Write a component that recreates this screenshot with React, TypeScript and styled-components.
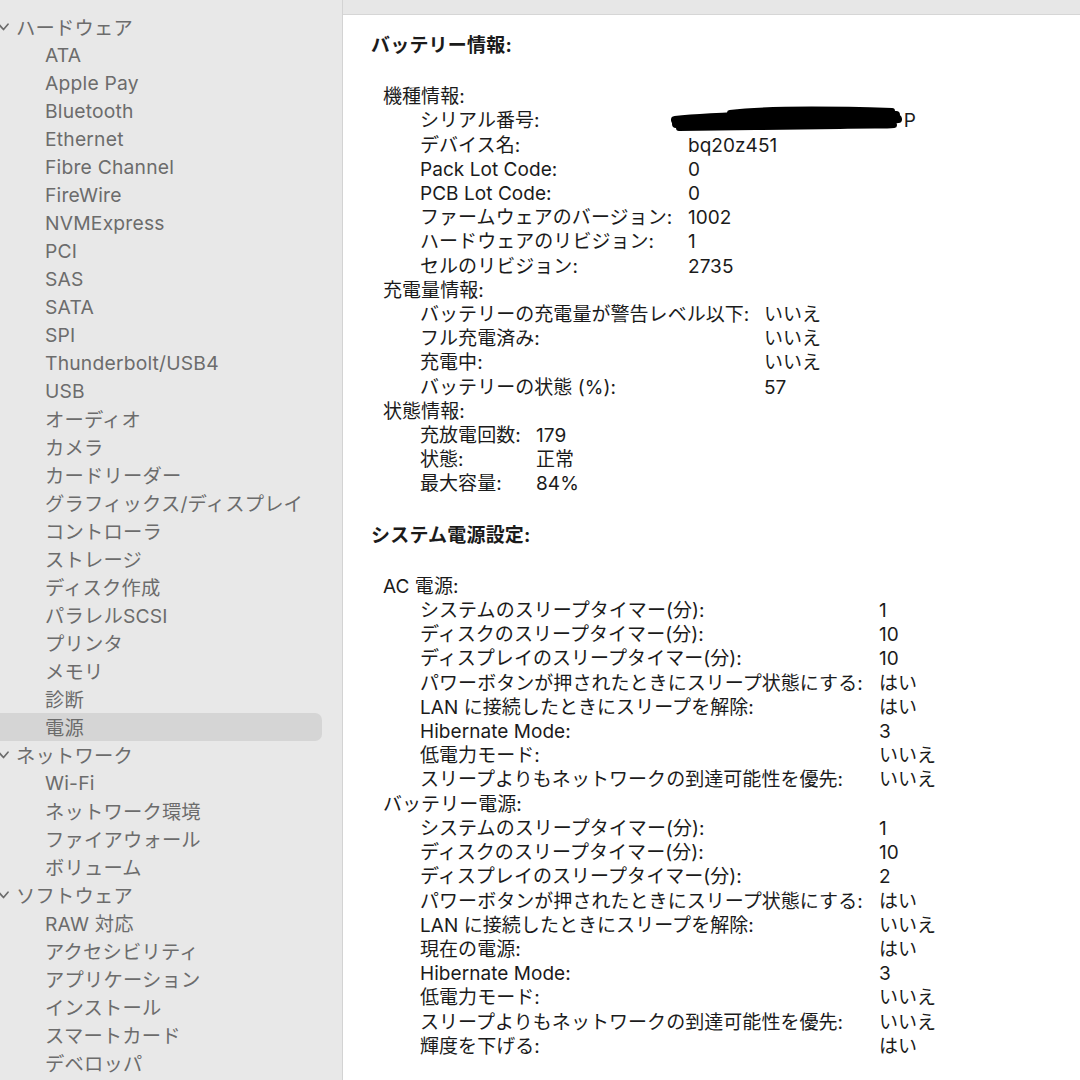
import styled, { createGlobalStyle } from "styled-components";

const GlobalStyle = createGlobalStyle`
  html, body {
    margin: 0;
    padding: 0;
    background: #ffffff;
  }
  body {
    font-family: Inter, "Noto Sans", "Noto Sans CJK JP", sans-serif;
    -webkit-font-smoothing: antialiased;
  }
`;

const Window = styled.div`
  display: grid;
  grid-template-columns: 343px 1fr;
  width: 1080px;
  height: 1080px;
  overflow: hidden;
`;

const Sidebar = styled.div`
  background: #e8e8e8;
  border-right: 1px solid #d3d3d3;
  padding-top: 13px;
  display: flex;
  flex-direction: column;
`;

const SideRow = styled.div<{ $selected?: boolean; $heading?: boolean }>`
  height: 28px;
  display: flex;
  align-items: center;
  gap: 7px;
  padding-left: ${(p) => (p.$heading ? "0" : "45px")};
  margin-right: 20px;
  border-radius: 0 7px 7px 0;
  background: ${(p) => (p.$selected ? "#d5d5d5" : "transparent")};
  color: #6c6c6c;
  font-size: 19.3px;
  letter-spacing: 0.2px;
  white-space: nowrap;
`;

const Chevron = styled.svg`
  width: 9px;
  height: 8px;
  flex: none;
`;

const Main = styled.div`
  display: flex;
  flex-direction: column;
  background: #ffffff;
`;

const TopStrip = styled.div`
  height: 14px;
  flex: none;
  background: #e7e7e7;
  border-bottom: 1px solid #d6d6d6;
`;

const Content = styled.div`
  padding: 19px 0 0 28px;
  color: #1b1b1b;
  font-size: 19px;
  letter-spacing: 0.05px;
  line-height: 24.2px;
`;

const SectionTitle = styled.div`
  font-weight: 700;
  margin-bottom: 27px;
  letter-spacing: 0.2px;
`;

const Section = styled.div`
  margin-bottom: 27px;
`;

const GroupTitle = styled.div`
  padding-left: 12px;
`;

const Grid = styled.div<{ $labelWidth: number }>`
  display: grid;
  grid-template-columns: ${(p) => p.$labelWidth}px auto;
  padding-left: 49px;
  white-space: nowrap;
`;

const Label = styled.div``;

const Value = styled.div``;

const Redacted = styled.span`
  position: relative;
  display: inline-block;
  width: 228px;
  text-align: right;
`;

const Scribble = styled.svg`
  position: absolute;
  left: -18px;
  top: -4px;
  width: 240px;
  height: 30px;
`;

type Row = [string, string];
type Group = { title: string; labelWidth: number; rows: Row[] };
type Sec = { title: string; groups: Group[] };

const hardware = [
  "ATA",
  "Apple Pay",
  "Bluetooth",
  "Ethernet",
  "Fibre Channel",
  "FireWire",
  "NVMExpress",
  "PCI",
  "SAS",
  "SATA",
  "SPI",
  "Thunderbolt/USB4",
  "USB",
  "オーディオ",
  "カメラ",
  "カードリーダー",
  "グラフィックス/ディスプレイ",
  "コントローラ",
  "ストレージ",
  "ディスク作成",
  "パラレルSCSI",
  "プリンタ",
  "メモリ",
  "診断",
  "電源",
];

const network = ["Wi-Fi", "ネットワーク環境", "ファイアウォール", "ボリューム"];

const software = [
  "RAW 対応",
  "アクセシビリティ",
  "アプリケーション",
  "インストール",
  "スマートカード",
  "デベロッパ",
];

const sections: Sec[] = [
  {
    title: "バッテリー情報:",
    groups: [
      {
        title: "機種情報:",
        labelWidth: 268,
        rows: [
          ["シリアル番号:", "__REDACTED__"],
          ["デバイス名:", "bq20z451"],
          ["Pack Lot Code:", "0"],
          ["PCB Lot Code:", "0"],
          ["ファームウェアのバージョン:", "1002"],
          ["ハードウェアのリビジョン:", "1"],
          ["セルのリビジョン:", "2735"],
        ],
      },
      {
        title: "充電量情報:",
        labelWidth: 344,
        rows: [
          ["バッテリーの充電量が警告レベル以下:", "いいえ"],
          ["フル充電済み:", "いいえ"],
          ["充電中:", "いいえ"],
          ["バッテリーの状態 (%):", "57"],
        ],
      },
      {
        title: "状態情報:",
        labelWidth: 116,
        rows: [
          ["充放電回数:", "179"],
          ["状態:", "正常"],
          ["最大容量:", "84%"],
        ],
      },
    ],
  },
  {
    title: "システム電源設定:",
    groups: [
      {
        title: "AC 電源:",
        labelWidth: 459,
        rows: [
          ["システムのスリープタイマー(分):", "1"],
          ["ディスクのスリープタイマー(分):", "10"],
          ["ディスプレイのスリープタイマー(分):", "10"],
          ["パワーボタンが押されたときにスリープ状態にする:", "はい"],
          ["LAN に接続したときにスリープを解除:", "はい"],
          ["Hibernate Mode:", "3"],
          ["低電力モード:", "いいえ"],
          ["スリープよりもネットワークの到達可能性を優先:", "いいえ"],
        ],
      },
      {
        title: "バッテリー電源:",
        labelWidth: 459,
        rows: [
          ["システムのスリープタイマー(分):", "1"],
          ["ディスクのスリープタイマー(分):", "10"],
          ["ディスプレイのスリープタイマー(分):", "2"],
          ["パワーボタンが押されたときにスリープ状態にする:", "はい"],
          ["LAN に接続したときにスリープを解除:", "いいえ"],
          ["現在の電源:", "はい"],
          ["Hibernate Mode:", "3"],
          ["低電力モード:", "いいえ"],
          ["スリープよりもネットワークの到達可能性を優先:", "いいえ"],
          ["輝度を下げる:", "はい"],
        ],
      },
    ],
  },
];

function Heading({ text }: { text: string }) {
  return (
    <SideRow $heading>
      <Chevron viewBox="0 0 9 8">
        <path
          d="M-1 1.5 L3.5 6.5 L8 1.2"
          fill="none"
          stroke="#6c6c6c"
          strokeWidth="1.7"
          strokeLinecap="round"
          strokeLinejoin="round"
        />
      </Chevron>
      {text}
    </SideRow>
  );
}

// marker scribble over the serial number, only the trailing "P" shows
function SerialValue() {
  return (
    <Redacted>
      P
      <Scribble viewBox="0 0 240 30">
        <g fill="none" stroke="#000" strokeLinecap="round">
          <path d="M5 15 C40 11 90 10 130 9 C170 8 205 9 226 10" strokeWidth="8" />
          <path d="M6 19 C50 16 110 17 160 15 C195 14 215 16 228 14" strokeWidth="8" />
          <path d="M9 23 C60 22 120 22 170 21 C200 20 215 21 224 20" strokeWidth="6" />
          <path d="M60 8 C100 3 160 4 222 6" strokeWidth="6" />
          <path d="M30 12 C90 12 170 11 218 12" strokeWidth="5" />
        </g>
      </Scribble>
    </Redacted>
  );
}

export default function App() {
  return (
    <>
      <GlobalStyle />
      <Window>
        <Sidebar>
          <Heading text="ハードウェア" />
          {hardware.map((item) => (
            <SideRow key={item} $selected={item === "電源"}>
              {item}
            </SideRow>
          ))}
          <Heading text="ネットワーク" />
          {network.map((item) => (
            <SideRow key={item}>{item}</SideRow>
          ))}
          <Heading text="ソフトウェア" />
          {software.map((item) => (
            <SideRow key={item}>{item}</SideRow>
          ))}
        </Sidebar>
        <Main>
          <TopStrip />
          <Content>
            {sections.map((sec) => (
              <div key={sec.title}>
                <SectionTitle>{sec.title}</SectionTitle>
                <Section>
                  {sec.groups.map((g) => (
                    <div key={g.title}>
                      <GroupTitle>{g.title}</GroupTitle>
                      <Grid $labelWidth={g.labelWidth}>
                        {g.rows.map(([label, value], i) => (
                          <>
                            <Label key={`l${i}`}>{label}</Label>
                            <Value key={`v${i}`}>
                              {value === "__REDACTED__" ? <SerialValue /> : value}
                            </Value>
                          </>
                        ))}
                      </Grid>
                    </div>
                  ))}
                </Section>
              </div>
            ))}
          </Content>
        </Main>
      </Window>
    </>
  );
}
